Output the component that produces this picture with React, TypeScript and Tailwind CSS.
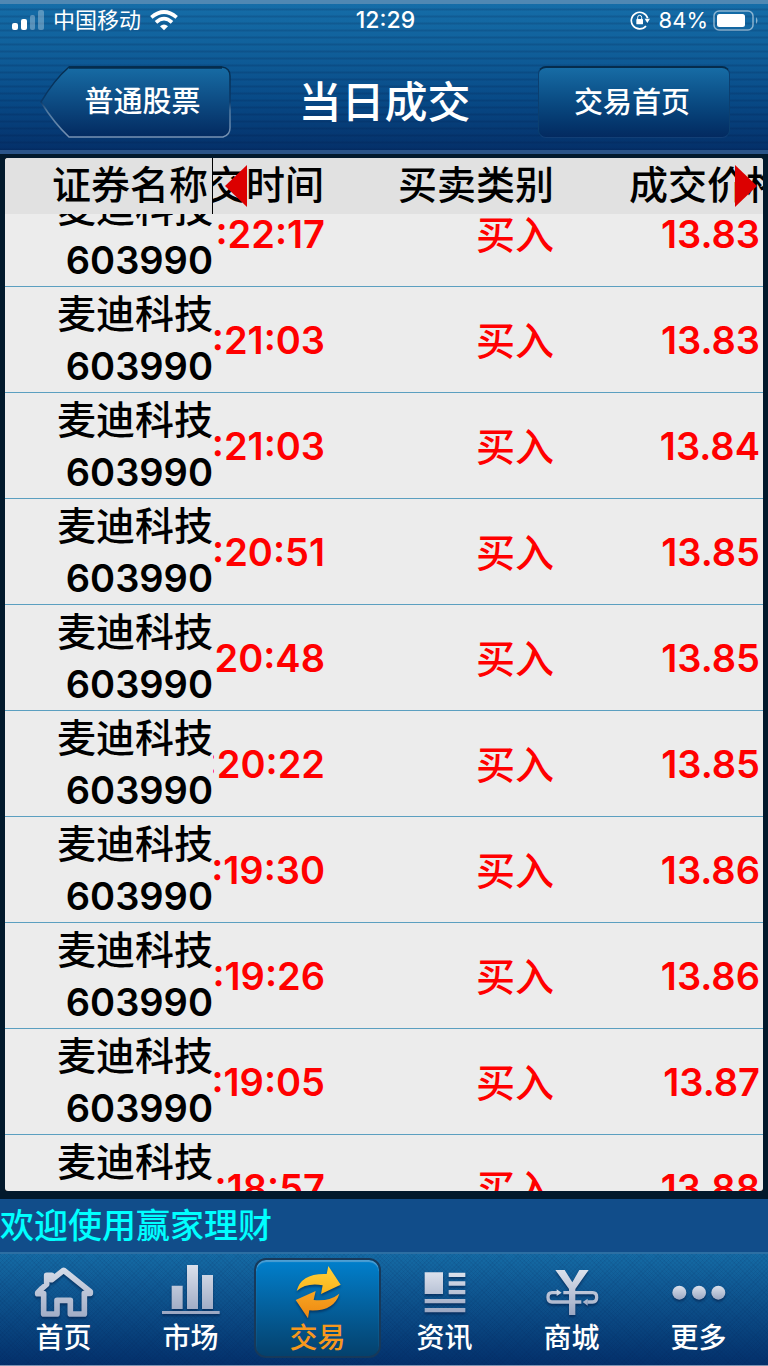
import { useLayoutEffect, useRef } from "react";
import type { ReactNode } from "react";

const trades = [
  { time: ":22:17", price: "13.83" },
  { time: ":21:03", price: "13.83" },
  { time: ":21:03", price: "13.84" },
  { time: ":20:51", price: "13.85" },
  { time: "20:48", price: "13.85" },
  { time: ":20:22", price: "13.85" },
  { time: ":19:30", price: "13.86" },
  { time: ":19:26", price: "13.86" },
  { time: ":19:05", price: "13.87" },
  { time: ":18:57", price: "13.88" },
];

function StatusBar() {
  return (
    <div className="grid h-10 grid-cols-3 items-center pl-3 pr-[9px] text-[22px] leading-none">
      <div className="flex items-center gap-[9px]">
        <svg className="h-5 w-8" viewBox="0 0 32 20" fill="#fff" aria-hidden="true">
          <rect x="0" y="13" width="6" height="7" rx="2" />
          <rect x="9" y="9" width="6" height="11" rx="2" />
          <rect x="18" y="5" width="5" height="15" rx="2" opacity=".3" />
          <rect x="26" y="0" width="6" height="20" rx="2" opacity=".3" />
        </svg>
        <span>中国移动</span>
        <svg className="h-[21px] w-7" viewBox="0 0 84 63" fill="none" stroke="#fff" strokeWidth="11" aria-hidden="true">
          <path d="M4 22Q42 -10 80 22" />
          <path d="M18 37Q42 15 66 37" />
          <path d="M30 49Q42 38 54 49L42 61Z" fill="#fff" stroke="none" />
        </svg>
      </div>
      <time className="text-center text-[23px] font-medium">12:29</time>
      <div className="flex items-center justify-end gap-[5px]">
        <svg className="mr-1 h-5 w-5" viewBox="0 0 60 60" fill="none" stroke="#fff" strokeWidth="5" aria-hidden="true">
          <path d="M48 48A25 25 0 1 1 53 25" />
          <path d="M44 26H60L52 39Z" fill="#fff" stroke="none" />
          <rect x="19" y="27" width="20" height="16" rx="2" fill="#fff" stroke="none" />
          <path d="M23 28V22a6 6 0 0 1 12 0v6" strokeWidth="3" />
        </svg>
        <span>84%</span>
        <svg className="h-[21px] w-[46px]" viewBox="0 0 46 21" aria-hidden="true">
          <rect x="1" y="1" width="39" height="19" rx="5" fill="none" stroke="#fff" strokeOpacity=".5" strokeWidth="1.5" />
          <rect x="4" y="4" width="28" height="13" rx="2.5" fill="#fff" />
          <path d="M43 7q3 3.500 0 7z" fill="#fff" opacity=".5" />
        </svg>
      </div>
    </div>
  );
}

function TopBar() {
  return (
    <header className="shrink-0 border-b-4 border-t-4 border-b-[#2b5488] border-t-[#5088b3] bg-[repeating-linear-gradient(180deg,rgba(0,20,60,0)_0px,rgba(0,20,60,0)_4px,rgba(0,20,60,0.16)_5px,rgba(0,20,60,0.16)_6px,rgba(0,20,60,0)_7px),linear-gradient(180deg,#156da8_0%,#10609b_30%,#084a87_65%,#043069_100%)] text-white">
      <div className="-mt-1">
        <StatusBar />
      </div>
      <div className="flex items-center justify-between pb-3 pl-10 pr-[38px] pt-[26px]">
        <button type="button" className="relative h-[72px] w-[191px] pl-[14px] text-[29px] font-medium">
          <svg className="absolute inset-0 h-full w-full" viewBox="0 0 191 72" fill="none" aria-hidden="true">
            <defs>
              <linearGradient id="back-fill" x1="0" y1="0" x2="0" y2="1">
                <stop offset="0" stopColor="#176ca5" />
                <stop offset="1" stopColor="#032a60" />
              </linearGradient>
              <linearGradient id="back-edge" x1="0" y1="0" x2="0" y2="1">
                <stop offset="0" stopColor="#052c4d" />
                <stop offset=".5" stopColor="#0a3969" />
                <stop offset=".62" stopColor="#4f789f" />
                <stop offset="1" stopColor="#7792b3" />
              </linearGradient>
            </defs>
            <path d="M1 36Q14 14 29 1H182Q190 2 190 10V62Q190 69 183 71H29Q14 57 1 36Z" fill="url(#back-fill)" stroke="url(#back-edge)" strokeWidth="1.500" />
            <path d="M29 1.500H182" stroke="#052c4d" strokeWidth="2.500" />
          </svg>
          <span className="relative">普通股票</span>
        </button>
        <h1 className="text-[43px] font-medium leading-[60px]">当日成交</h1>
        <button
          type="button"
          className="h-[72px] w-[192px] rounded-lg border border-t-2 border-[#0b3f70] border-b-[#123f76] border-t-[#052c4d] bg-linear-to-b from-[#176ca5] to-[#032a60] pr-1 text-[29px] font-medium"
        >
          交易首页
        </button>
      </div>
    </header>
  );
}

function TradeTable() {
  const scroller = useRef<HTMLDivElement>(null);

  useLayoutEffect(() => {
    if (scroller.current) scroller.current.scrollTop = 33;
  }, []);

  return (
    <main className="relative flex min-h-0 flex-1 flex-col border-x-[5px] border-b-8 border-t-4 border-[#02192c]">
      <div ref={scroller} className="min-h-0 flex-1 overflow-x-hidden overflow-y-auto rounded-[3px] bg-[#ececec] [scrollbar-width:none]">
        <table className="w-full table-fixed border-separate border-spacing-0 text-right text-[39px] font-medium leading-[53px] text-[#ff0000]">
          <colgroup>
            <col className="w-[208px]" />
            <col className="w-[112px]" />
            <col className="w-[229px]" />
            <col />
          </colgroup>
          <thead className="sticky top-0 z-10 bg-[#e1e1e1] align-top text-black">
            <tr className="h-14">
              <th scope="col" className="whitespace-nowrap border-r border-black p-0 pr-1 font-medium">证券名称</th>
              <th scope="col" className="p-0 font-medium">
                <div className="flex justify-end overflow-hidden whitespace-nowrap pr-px">交时间</div>
              </th>
              <th scope="col" className="whitespace-nowrap p-0 font-medium">买卖类别</th>
              <th scope="col" className="overflow-hidden whitespace-nowrap p-0 pl-[75px] text-left font-medium">成交价格</th>
            </tr>
          </thead>
          <tbody>
            {trades.map((trade, index) => (
              <tr key={index} className="h-[106px]">
                <td className="p-0 text-black shadow-[inset_0_-1px_#5b9fc0]">
                  <div>麦迪科技</div>
                  <div className="text-[38px] font-semibold leading-[53px]">603990</div>
                </td>
                <td className="p-0 shadow-[inset_0_-1px_#5b9fc0]">
                  <div className="flex justify-end overflow-hidden whitespace-nowrap text-[38px] font-semibold leading-[53px]">{trade.time}</div>
                </td>
                <td className="p-0 shadow-[inset_0_-1px_#5b9fc0]">买入</td>
                <td className="p-0 pr-[3px] text-[38px] font-semibold leading-[53px] shadow-[inset_0_-1px_#5b9fc0]">{trade.price}</td>
              </tr>
            ))}
          </tbody>
        </table>
      </div>
      <svg className="absolute left-[220px] top-[7px] z-20 h-[42px] w-[22px]" viewBox="0 0 22 42" aria-hidden="true">
        <path d="M0 21L22 0V42Z" fill="#dc0000" />
      </svg>
      <svg className="absolute right-[6px] top-[7px] z-20 h-[42px] w-[22px]" viewBox="0 0 22 42" aria-hidden="true">
        <path d="M22 21L0 0V42Z" fill="#dc0000" />
      </svg>
    </main>
  );
}

function NavIcon({ viewBox, children }: { viewBox: string; children: ReactNode }) {
  return (
    <svg className="h-[54px] w-[60px] shrink-0 drop-shadow-[0_2px_1px_rgba(0,20,60,0.5)]" viewBox={viewBox} fill="url(#silver)" aria-hidden="true">
      {children}
    </svg>
  );
}

const tabs = [
  {
    label: "首页",
    icon: (
      <NavIcon viewBox="102 57 180 162">
        <path
          d="M113 143L126 130L140 118V91H155V104L191 76L271 140V145H253V207H211V166H171V207H131V146H113Z"
          fill="none"
          stroke="url(#silver-line)"
          strokeWidth="17"
          strokeLinejoin="round"
        />
      </NavIcon>
    ),
  },
  {
    label: "市场",
    icon: (
      <NavIcon viewBox="480 57 180 162">
        <path d="M512 122H545V192H512ZM558 60H591V192H558ZM603 90H636V192H603ZM483 198H656V207H483Z" />
      </NavIcon>
    ),
  },
  {
    label: "交易",
    icon: (
      <NavIcon viewBox="146 57 180 162">
        <path d="M172 138Q185 84 262 87L267 63L304 119L245 147L250 121Q202 112 172 138Z" fill="url(#gold-top)" />
        <path d="M300 146Q284 200 210 196L206 220L169 165L229 138L223 165Q270 170 300 146Z" fill="url(#gold-bottom)" />
      </NavIcon>
    ),
  },
  {
    label: "资讯",
    icon: (
      <NavIcon viewBox="526 57 180 162">
        <path d="M555 82H610V147H555ZM627 83H677V96H627ZM627 109H677V122H627ZM627 135H677V148H627ZM555 162H677V175H555ZM555 189H677V202H555Z" />
      </NavIcon>
    ),
  },
  {
    label: "商城",
    icon: (
      <NavIcon viewBox="140 57 180 162">
        <path d="M180 75H208L231 112L252 75H280L240 132V210H221V132Z" />
        <path
          d="M204 143H292Q304 143 304 157Q304 171 292 171H276M258 171H170Q158 171 158 157Q158 143 170 143H186"
          fill="none"
          stroke="url(#silver-line)"
          strokeWidth="10"
        />
        <path d="M184 133L199 143L184 153ZM277 161L262 171L277 182Z" />
      </NavIcon>
    ),
  },
  {
    label: "更多",
    icon: (
      <NavIcon viewBox="521 57 180 162">
        <circle cx="552" cy="143" r="21" />
        <circle cx="611" cy="143" r="21" />
        <circle cx="669" cy="143" r="21" />
      </NavIcon>
    ),
  },
];

function TabBar() {
  return (
    <nav className="shrink-0 border-b border-t-2 border-b-[#7d93b2] border-t-[#2d6fa3] bg-[repeating-linear-gradient(45deg,rgba(0,30,80,0.08)_0px,rgba(0,30,80,0.08)_1px,transparent_1px,transparent_3px),repeating-linear-gradient(135deg,rgba(0,30,80,0.08)_0px,rgba(0,30,80,0.08)_1px,transparent_1px,transparent_3px),linear-gradient(180deg,#156ba5,#03306b)] pb-[7px] pr-[6px] pt-1">
      <svg className="absolute h-0 w-0" aria-hidden="true">
        <defs>
          <linearGradient id="silver" x1="0" y1="0" x2="0" y2="1">
            <stop offset="0" stopColor="#dbe1ec" />
            <stop offset="1" stopColor="#9ba7c2" />
          </linearGradient>
          <linearGradient id="silver-line" gradientUnits="userSpaceOnUse" x1="0" y1="70" x2="0" y2="215">
            <stop offset="0" stopColor="#d6dce8" />
            <stop offset="1" stopColor="#a2adc6" />
          </linearGradient>
          <linearGradient id="gold-top" x1="0" y1="0" x2="0" y2="1">
            <stop offset="0" stopColor="#ffd23a" />
            <stop offset="1" stopColor="#fbb31c" />
          </linearGradient>
          <linearGradient id="gold-bottom" x1="0" y1="0" x2="0" y2="1">
            <stop offset="0" stopColor="#f7a623" />
            <stop offset="1" stopColor="#ee8710" />
          </linearGradient>
        </defs>
      </svg>
      <ul className="grid grid-cols-6">
        {tabs.map((tab) => {
          const active = tab.label === "交易";
          return (
            <li key={tab.label}>
              <a
                href="#"
                aria-current={active ? "page" : undefined}
                className={
                  active
                    ? "flex h-[100px] flex-col items-center rounded-xl border-2 border-[#17395a] bg-linear-to-b from-[#0080cd] to-[#04416d] pt-1 text-[#f7981d] shadow-[inset_0_2px_1px_#4d9fd3]"
                    : "flex h-[100px] flex-col items-center pt-[6px] text-white"
                }
              >
                {tab.icon}
                <span className="text-[28px] font-medium leading-10">{tab.label}</span>
              </a>
            </li>
          );
        })}
      </ul>
    </nav>
  );
}

export default function App() {
  return (
    <div className="flex h-dvh flex-col overflow-hidden bg-[#111] font-['Inter','Noto_Sans_CJK_SC',sans-serif]">
      <TopBar />
      <TradeTable />
      <p className="shrink-0 bg-[#114d8a] text-[34px] font-medium leading-[53px] text-[#00ffff]">欢迎使用赢家理财</p>
      <TabBar />
    </div>
  );
}
